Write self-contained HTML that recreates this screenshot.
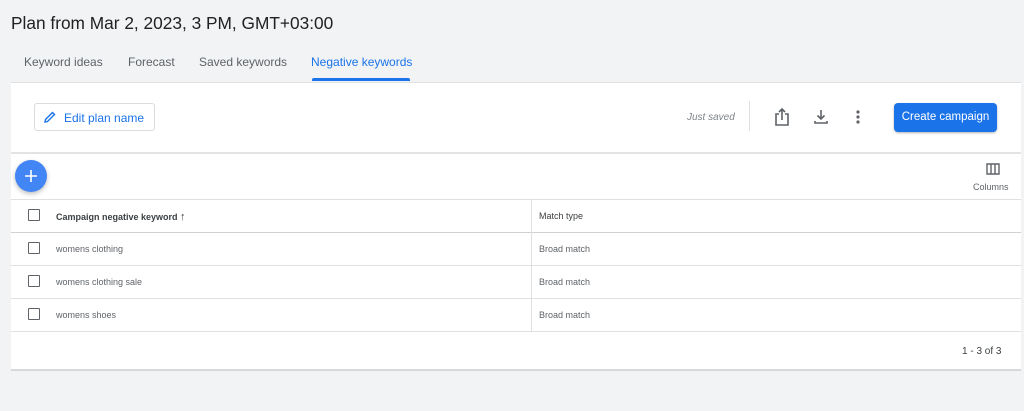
<!DOCTYPE html>
<html><head><style>
*{margin:0;padding:0;box-sizing:border-box}
body{width:1024px;height:411px;background:#f1f3f4;font-family:"Liberation Sans",Arial,sans-serif;position:relative;overflow:hidden;color:#3c4043}
.a{position:absolute}
.title{left:11px;top:13px;font-size:17.3px;color:#202124}
.tab{top:55px;font-size:12px;color:#5f6368}
.panel{left:11px;top:82px;width:1010px;height:289px;background:#fff;border-bottom:2px solid #d6d8da;border-top:1px solid #e0e0e0}
.hl{height:1px;background:#e0e0e0;left:11px;width:1010px}
.cb{width:12px;height:12px;border:1.5px solid #5f6368;border-radius:1px;left:28px}
.cell{font-size:9px;color:#5f6368}
</style></head><body>
<div class="a title">Plan from Mar 2, 2023, 3 PM, GMT+03:00</div>
<div class="a tab" style="left:24px">Keyword ideas</div>
<div class="a tab" style="left:128px">Forecast</div>
<div class="a tab" style="left:199px">Saved keywords</div>
<div class="a tab" style="left:311px;color:#1a73e8">Negative keywords</div>
<div class="a" style="left:312px;top:78px;width:98px;height:3px;background:#1a73e8;border-radius:2px 2px 0 0"></div>
<div class="a panel"></div>
<div class="a" style="left:34px;top:103px;width:121px;height:28px;border:1px solid #dadce0;border-radius:3px;background:#fff"></div>
<svg class="a" style="left:44px;top:111px" width="12" height="12" viewBox="0 0 12 12"><path d="M1 11 L1.5 8.5 L8.5 1.5 L10.5 3.5 L3.5 10.5 Z" fill="none" stroke="#1a73e8" stroke-width="1.4"/></svg>
<div class="a" style="left:64px;top:111px;font-size:12px;color:#1a73e8">Edit plan name</div>
<div class="a" style="left:687px;top:112px;font-size:10px;font-style:italic;color:#80868b">Just saved</div>
<div class="a" style="left:749px;top:101px;width:1px;height:30px;background:#e0e0e0"></div>
<svg class="a" style="left:774px;top:107px" width="16" height="20" viewBox="0 0 16 20"><path d="M5 7H2v11h12V7h-3M8 13V2M5 5l3-3 3 3" fill="none" stroke="#5f6368" stroke-width="1.6"/></svg>
<svg class="a" style="left:813px;top:109px" width="16" height="16" viewBox="0 0 16 16"><path d="M8 1v9M4.5 6.5 8 10l3.5-3.5M2 12v2h12v-2" fill="none" stroke="#5f6368" stroke-width="1.6"/></svg>
<svg class="a" style="left:855px;top:109px" width="6" height="16"><circle cx="3" cy="3" r="1.6" fill="#5f6368"/><circle cx="3" cy="8" r="1.6" fill="#5f6368"/><circle cx="3" cy="13" r="1.6" fill="#5f6368"/></svg>
<div class="a" style="left:894px;top:103px;width:103px;height:29px;background:#1a73e8;border-radius:4px;color:#fff;font-size:11.5px;text-align:center;line-height:29px;box-shadow:0 1px 2px rgba(0,0,0,.3)">Create campaign</div>
<div class="a hl" style="top:152px;height:2px;background:#e3e3e3"></div>
<div class="a" style="left:15px;top:160px;width:32px;height:32px;border-radius:50%;background:#4285f4;box-shadow:0 2px 5px rgba(0,0,0,.25)"></div>
<svg class="a" style="left:23px;top:168px" width="16" height="16"><path d="M8 2v12M2 8h12" stroke="#fff" stroke-width="1.6"/></svg>
<svg class="a" style="left:986px;top:163px" width="14" height="12" viewBox="0 0 14 12"><path d="M1 1h12v10H1zM5 1v10M9 1v10" fill="none" stroke="#5f6368" stroke-width="1.4"/></svg>
<div class="a" style="left:973px;top:182px;font-size:9px;color:#5f6368">Columns</div>
<div class="a hl" style="top:199px"></div>
<div class="a hl" style="top:232px;background:#d0d0d0"></div>
<div class="a hl" style="top:265px"></div>
<div class="a hl" style="top:298px"></div>
<div class="a hl" style="top:331px"></div>
<div class="a" style="left:531px;top:199px;width:1px;height:132px;background:#e0e0e0"></div>
<div class="a cb" style="top:209px"></div>
<div class="a cell" style="left:56px;top:211px;font-weight:bold;color:#3c4043">Campaign negative keyword <span style="font-weight:normal;font-size:11px">↑</span></div>
<div class="a cell" style="left:539px;top:211px;color:#3c4043">Match type</div>
<div class="a cb" style="top:242px"></div>
<div class="a cell" style="left:56px;top:244px">womens clothing</div>
<div class="a cell" style="left:539px;top:244px">Broad match</div>
<div class="a cb" style="top:275px"></div>
<div class="a cell" style="left:56px;top:277px">womens clothing sale</div>
<div class="a cell" style="left:539px;top:277px">Broad match</div>
<div class="a cb" style="top:308px"></div>
<div class="a cell" style="left:56px;top:310px">womens shoes</div>
<div class="a cell" style="left:539px;top:310px">Broad match</div>
<div class="a" style="left:962px;top:346px;font-size:10px;color:#3c4043">1 - 3 of 3</div>
</body></html>
